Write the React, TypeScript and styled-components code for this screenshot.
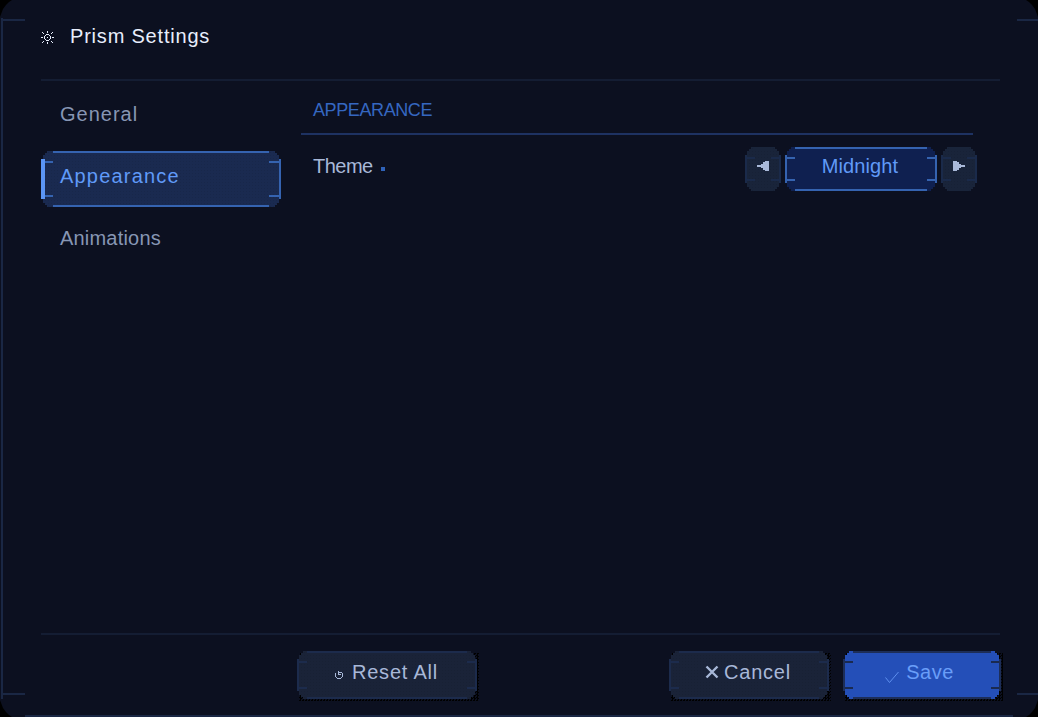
import styled, { createGlobalStyle, css } from "styled-components";

const GlobalStyle = createGlobalStyle`
  html, body {
    margin: 0;
    background: #000;
    overflow: hidden;
  }
  * {
    box-sizing: border-box;
  }
`;

type TFrame = {
  fill: string;
  edge: string;
  side?: string;
  leftSide?: string;
  leftWidth?: number;
  tick?: string;
  cap?: number;
  grain?: boolean;
};

const paint = (color: string) => `linear-gradient(${color}, ${color})`;

// the chunky game-ui border: side bars, four ticks, top and bottom edges
const pixelFrame = ({
  fill,
  edge,
  side = edge,
  leftSide = side,
  leftWidth = 2,
  tick = side,
  cap = 12,
  grain = false,
}: TFrame) => css`
  background:
    ${paint(leftSide)} 0 8px / ${leftWidth}px calc(100% - 16px) no-repeat,
    ${paint(side)} 100% 8px / 2px calc(100% - 16px) no-repeat,
    ${paint(tick)} 0 10px / ${cap}px 2px no-repeat,
    ${paint(tick)} 100% 10px / ${cap}px 2px no-repeat,
    ${paint(tick)} 0 calc(100% - 10px) / ${cap}px 2px no-repeat,
    ${paint(tick)} 100% calc(100% - 10px) / ${cap}px 2px no-repeat,
    ${paint(edge)} ${cap}px 0 / calc(100% - ${cap * 2}px) 2px no-repeat,
    ${paint(edge)} ${cap}px 100% / calc(100% - ${cap * 2}px) 2px no-repeat,
    ${grain
      ? "radial-gradient(rgba(0, 0, 0, 0.07) 0.6px, transparent 0.8px) 0 0 / 3px 3px,"
      : ""}
    ${paint(fill)} 2px 0 / calc(100% - 4px) 100% no-repeat;
  clip-path: polygon(
    6px 0,
    calc(100% - 6px) 0,
    calc(100% - 6px) 2px,
    calc(100% - 4px) 2px,
    calc(100% - 4px) 4px,
    calc(100% - 2px) 4px,
    calc(100% - 2px) 8px,
    100% 8px,
    100% calc(100% - 8px),
    calc(100% - 2px) calc(100% - 8px),
    calc(100% - 2px) calc(100% - 4px),
    calc(100% - 4px) calc(100% - 4px),
    calc(100% - 4px) calc(100% - 2px),
    calc(100% - 6px) calc(100% - 2px),
    calc(100% - 6px) 100%,
    6px 100%,
    6px calc(100% - 2px),
    4px calc(100% - 2px),
    4px calc(100% - 4px),
    2px calc(100% - 4px),
    2px calc(100% - 8px),
    0 calc(100% - 8px),
    0 8px,
    2px 8px,
    2px 4px,
    4px 4px,
    4px 2px,
    6px 2px
  );
`;

const Window = styled.div`
  width: 1038px;
  height: 717px;
  padding: 0 37px 18px 41px;
  display: flex;
  flex-direction: column;
  font-family: "Liberation Sans", Arial, sans-serif;
  font-size: 20px;
  background:
    ${paint("#1a2744")} 1px 18px / 2px calc(100% - 36px) no-repeat,
    ${paint("#1a2744")} 1px 19px / 24px 2px no-repeat,
    ${paint("#1a2744")} 100% 19px / 21px 2px no-repeat,
    ${paint("#1a2744")} 1px calc(100% - 22px) / 24px 2px no-repeat,
    ${paint("#1a2744")} 100% calc(100% - 22px) / 21px 2px no-repeat,
    ${paint("#1a2744")} 25px 100% / 988px 2px no-repeat,
    #0c1020;
  clip-path: polygon(
    12px 0,
    calc(100% - 12px) 0,
    calc(100% - 9px) 2px,
    calc(100% - 6px) 5px,
    calc(100% - 3px) 9px,
    100% 17px,
    100% calc(100% - 17px),
    calc(100% - 3px) calc(100% - 9px),
    calc(100% - 6px) calc(100% - 5px),
    calc(100% - 9px) calc(100% - 2px),
    calc(100% - 12px) 100%,
    12px 100%,
    9px calc(100% - 2px),
    6px calc(100% - 5px),
    3px calc(100% - 9px),
    0 calc(100% - 17px),
    0 17px,
    3px 9px,
    6px 5px,
    9px 2px
  );
`;

const Header = styled.header`
  flex: none;
  height: 81px;
  padding: 19px 0 0;
  margin-right: 1px;
  display: flex;
  align-items: flex-start;
  gap: 16px;
  border-bottom: 2px solid #141d33;
`;

const SunIcon = styled.svg`
  width: 13px;
  height: 13px;
  margin-top: 12px;
  fill: #e8eefc;
  shape-rendering: crispEdges;
`;

const Title = styled.h1`
  margin: 0;
  font-size: 20px;
  font-weight: 400;
  line-height: 34px;
  letter-spacing: 0.8px;
  color: #e8eefc;
`;

const Body = styled.div`
  flex: 1;
  min-height: 0;
  display: flex;
  gap: 20px;
`;

const Sidebar = styled.nav`
  flex: none;
  width: 240px;
  padding-top: 8px;
  display: flex;
  flex-direction: column;
  gap: 6px;
`;

const NavItem = styled.div<{ $active?: boolean; $tracking: number }>`
  height: 56px;
  padding: 0 0 5px 19px;
  display: flex;
  align-items: center;
  letter-spacing: ${(p) => p.$tracking}px;
  color: ${(p) => (p.$active ? "#609af8" : "#8796b4")};
  ${(p) =>
    p.$active &&
    pixelFrame({
      fill: "#1a2a50",
      edge: "#3563b0",
      leftSide: "#5b95f5",
      leftWidth: 4,
      grain: true,
    })}
`;

const Main = styled.main`
  width: 672px;
  padding-top: 14px;
`;

const SectionTitle = styled.h2`
  margin: 0;
  height: 40px;
  padding-left: 12px;
  font-size: 18px;
  font-weight: 400;
  line-height: 30px;
  letter-spacing: -0.4px;
  color: #3567c0;
  border-bottom: 2px solid #1e3262;
`;

const SettingRow = styled.div`
  margin: 12px -4px 0 0;
  padding-left: 12px;
  display: flex;
  align-items: center;
  justify-content: space-between;
`;

const SettingLabel = styled.div`
  padding-bottom: 6px;
  display: flex;
  align-items: center;
  gap: 8px;
  color: #a8b8d8;
  line-height: 28px;
  letter-spacing: -0.5px;
`;

const ChangedDot = styled.span`
  width: 4px;
  height: 4px;
  margin-top: 6px;
  background: #2f62b8;
`;

const Selector = styled.div`
  display: flex;
  gap: 4px;
`;

const ArrowButton = styled.button`
  width: 36px;
  height: 44px;
  padding: 0;
  border: 0;
  display: flex;
  align-items: center;
  justify-content: center;
  ${pixelFrame({ fill: "#19243a", edge: "#19243a", side: "#1a2a4a", cap: 10, grain: true })}
`;

const ArrowIcon = styled.svg`
  width: 12px;
  height: 10px;
  margin-top: -6px;
  fill: #a9b9d9;
  shape-rendering: crispEdges;
`;

const SelectorValue = styled.div`
  width: 152px;
  height: 44px;
  padding: 0 2px 6px 0;
  display: flex;
  align-items: center;
  justify-content: center;
  letter-spacing: 0.1px;
  color: #609af8;
  ${pixelFrame({ fill: "#0f2050", edge: "#3563b0", cap: 10 })}
`;

const Footer = styled.footer`
  flex: none;
  height: 66px;
  padding: 18px 0 0 256px;
  display: flex;
  align-items: flex-start;
  justify-content: space-between;
  position: relative;

  &::before {
    content: "";
    position: absolute;
    top: 0;
    left: 0;
    right: 1px;
    height: 2px;
    background: #141d33;
  }
`;

const FooterRight = styled.div`
  display: flex;
  gap: 14px;
`;

const ButtonShell = styled.div`
  position: relative;

  &::before {
    content: "";
    position: absolute;
    inset: 2px -2px -2px 2px;
    background: repeating-conic-gradient(#000 0 25%, transparent 0 50%) 0 0 / 3px 3px;
  }
`;

const FooterButton = styled.button<{
  $width: number;
  $primary?: boolean;
  $gap: number;
  $nudge?: number;
}>`
  position: relative;
  width: ${(p) => p.$width}px;
  height: 48px;
  padding: 0 ${(p) => p.$nudge ?? 0}px 0 0;
  border: 0;
  display: flex;
  align-items: center;
  justify-content: center;
  gap: ${(p) => p.$gap}px;
  font: inherit;
  letter-spacing: ${(p) => (p.$primary ? 0.5 : 0.8)}px;
  color: ${(p) => (p.$primary ? "#6a9ef8" : "#a8b8d8")};
  ${(p) =>
    p.$primary
      ? pixelFrame({
          fill: "#244fb8",
          edge: "#1d2e58",
          tick: "#1a2a50",
          cap: 10,
        })
      : pixelFrame({
          fill: "#1a2338",
          edge: "#1c2b4c",
          tick: "#1c2b4c",
          cap: 10,
          grain: true,
        })}
`;

const ButtonText = styled.span`
  padding-bottom: 6px;
`;

const SmallIcon = styled.svg<{ $size: number; $drop: number }>`
  flex: none;
  width: ${(p) => p.$size}px;
  height: ${(p) => p.$size}px;
  margin-top: ${(p) => p.$drop}px;
`;

const App = () => {
  return (
    <Window>
      <GlobalStyle />
      <Header>
        <SunIcon viewBox="0 0 13 13">
          <path d="M5 3h3v1H5zM5 9h3v1H5zM3 5h1v3H3zM9 5h1v3H9zM4 4h1v1H4zM8 4h1v1H8zM4 8h1v1H4zM8 8h1v1H8zM6 6h1v1H6zM6 0h1v2H6zM6 11h1v2H6zM0 6h2v1H0zM11 6h2v1h-2zM1 1h1v1H1zM2 2h1v1H2zM11 1h1v1h-1zM10 2h1v1h-1zM1 11h1v1H1zM2 10h1v1H2zM11 11h1v1h-1zM10 10h1v1h-1z" />
        </SunIcon>
        <Title>Prism Settings</Title>
      </Header>
      <Body>
        <Sidebar>
          <NavItem $tracking={1}>General</NavItem>
          <NavItem $active $tracking={1.2}>
            Appearance
          </NavItem>
          <NavItem $tracking={0.2}>Animations</NavItem>
        </Sidebar>
        <Main>
          <SectionTitle>APPEARANCE</SectionTitle>
          <SettingRow>
            <SettingLabel>
              Theme
              <ChangedDot />
            </SettingLabel>
            <Selector>
              <ArrowButton>
                <ArrowIcon viewBox="0 0 12 10">
                  <path d="M0 4h4V3h2V1h2V0h4v10H8V9H6V7H4V6H0z" />
                </ArrowIcon>
              </ArrowButton>
              <SelectorValue>Midnight</SelectorValue>
              <ArrowButton>
                <ArrowIcon viewBox="0 0 12 10">
                  <path d="M12 4H8V3H6V1H4V0H0v10h4V9h2V7h2V6h4z" />
                </ArrowIcon>
              </ArrowButton>
            </Selector>
          </SettingRow>
        </Main>
      </Body>
      <Footer>
        <ButtonShell>
          <FooterButton $width={180} $gap={9} $nudge={1}>
            <SmallIcon $size={8} $drop={0} viewBox="0 0 8 8" fill="#a8b8d8" shapeRendering="crispEdges">
              <path d="M0 2h1v4H0zM1 6h1v1H1zM2 7h4v1H2zM6 6h1v1H6zM7 2h1v4H7zM4 1h3v1H4zM3 0h1v4H3zM4 3h2v1H4z" />
            </SmallIcon>
            <ButtonText>Reset All</ButtonText>
          </FooterButton>
        </ButtonShell>
        <FooterRight>
          <ButtonShell>
            <FooterButton $width={160} $gap={5} $nudge={2}>
              <SmallIcon $size={14} $drop={-6} viewBox="0 0 14 14" stroke="#a8b8d8" strokeWidth="2.4">
                <path d="M1.5 1.5l11 11M12.5 1.5l-11 11" />
              </SmallIcon>
              <ButtonText>Cancel</ButtonText>
            </FooterButton>
          </ButtonShell>
          <ButtonShell>
            <FooterButton $width={158} $primary $gap={7} $nudge={5}>
              <SmallIcon $size={14} $drop={4} viewBox="0 0 14 14" stroke="#5e90ee" strokeWidth="1" fill="none">
                <path d="M0.5 7.5l4 5L13.5 2" />
              </SmallIcon>
              <ButtonText>Save</ButtonText>
            </FooterButton>
          </ButtonShell>
        </FooterRight>
      </Footer>
    </Window>
  );
};

export default App;
